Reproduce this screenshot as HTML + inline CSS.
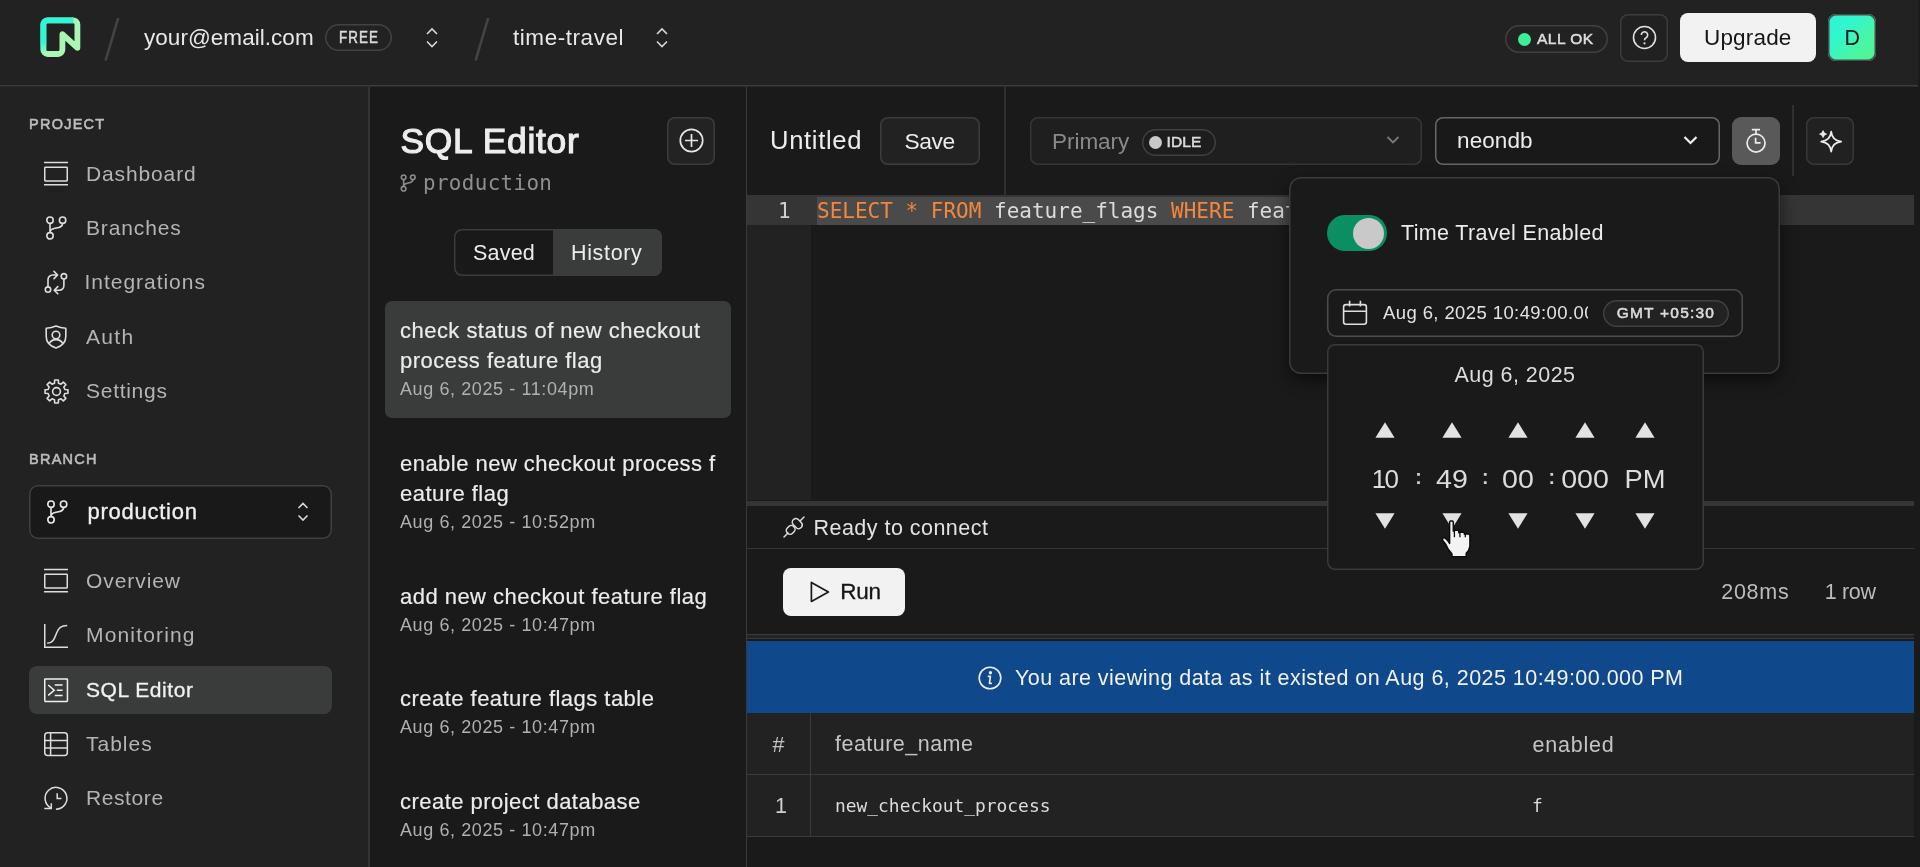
<!DOCTYPE html>
<html lang="en">
<head>
<meta charset="utf-8">
<title>Neon Console - SQL Editor</title>
<style>
*{box-sizing:border-box;margin:0;padding:0}
html,body{width:1920px;height:867px;overflow:hidden;background:#1a1a1a;color:#e6e6e6;font-family:"Liberation Sans",sans-serif;}
.abs{position:absolute}
.t{position:absolute;white-space:nowrap;line-height:1}
.mono{font-family:"DejaVu Sans Mono","Liberation Mono",monospace}
svg{position:absolute;overflow:visible}

/* header */
#header{position:absolute;left:0;top:0;width:1918px;height:85px;background:#222222}
#hline{position:absolute;left:0;top:85px;width:1918px;height:2px;background:linear-gradient(#3a3c3b 0,#3a3c3b 50%,#2a2b2a 50%,#2a2b2a 100%);z-index:3}
/* sidebar */
#sidebar{position:absolute;left:0;top:86px;width:370px;height:781px;background:#222222;border-right:2px solid #333}
#list{position:absolute;left:370px;top:86px;width:377px;height:781px;background:#1a1a1a;border-right:1px solid #3a3a3a}
#main{position:absolute;left:747px;top:86px;width:1173px;height:781px;background:#1a1a1a}

.nav{position:absolute;left:86px;font-size:21px;color:#b4b4b4;white-space:nowrap;line-height:1;letter-spacing:0.45px;margin-top:0px}
.lbl{position:absolute;left:29px;font-size:14.5px;color:#bdbdbd;letter-spacing:1.25px;line-height:1;-webkit-text-stroke:0.55px #bdbdbd}
.btn{position:absolute;border-radius:8px;background:#222}
.q{position:absolute;left:400px;font-size:22px;color:#ececec;white-space:nowrap;line-height:30px;letter-spacing:0.47px;-webkit-text-stroke:0.2px #e8e8e8}
.d{position:absolute;left:400px;font-size:18px;color:#b0b0b0;white-space:nowrap;line-height:1;letter-spacing:0.6px}
.num{font-size:26px;color:#dcdcdc;letter-spacing:0.3px}
#wrap{position:absolute;left:0;top:0;width:1920px;height:867px;will-change:transform}
</style>
</head>
<body>
<div id="wrap">
<div id="header">
<svg style="left:40px;top:16px" width="42" height="42" viewBox="0 0 42 42"><defs><linearGradient id="lg" gradientUnits="userSpaceOnUse" x1="0" y1="0" x2="0" y2="42"><stop offset="0" stop-color="#2ef7d9"/><stop offset="0.62" stop-color="#2ef7d9"/><stop offset="0.9" stop-color="#2ef7d9" stop-opacity="0"/><stop offset="1" stop-color="#2ef7d9" stop-opacity="0"/></linearGradient></defs>
<path d="M3.4 33.8 V8.5 a4.2 4.2 0 0 1 4.2 -4.2 H33.2 a4.2 4.2 0 0 1 4.2 4.2 V31.8 L22.4 18.2 V33.8 a4.2 4.2 0 0 1 -4.2 4.2 H7.6 a4.2 4.2 0 0 1 -4.2 -4.2 Z" fill="none" stroke="#a9f7b4" stroke-width="5.8" stroke-linejoin="round" stroke-linecap="round"/>
<path d="M3.4 38 V8.5 a4.2 4.2 0 0 1 4.2 -4.2 H33.4" fill="none" stroke="url(#lg)" stroke-width="5.8" stroke-linejoin="round"/></svg>
<svg style="left:100px;top:14px" width="24" height="50"><line x1="18.2" y1="4" x2="5.6" y2="46.5" stroke="#444" stroke-width="2.6"/></svg>
<div class="t" id="email" style="left:144.0px;top:27px;font-size:22.5px;color:#e8e8e8;letter-spacing:0.04px">your@email.com</div>
<div class="abs" style="left:325px;top:24px;width:67px;height:27px;box-shadow:inset 0 0 0 1.5px #424242;border-radius:14px"></div>
<div class="t" id="free" style="left:338.8px;top:30px;font-size:16px;color:#dcdcdc;letter-spacing:1.2px;-webkit-text-stroke:0.5px #dcdcdc;transform:scaleX(0.84);transform-origin:0 0">FREE</div>
<svg style="left:424px;top:26px" width="16" height="24"><path d="M3 8 L8 3 L13 8 M3 15.5 L8 20.5 L13 15.5" fill="none" stroke="#d8d8d8" stroke-width="1.6"/></svg>
<svg style="left:470px;top:14px" width="24" height="50"><line x1="18.2" y1="4" x2="5.6" y2="46.5" stroke="#444" stroke-width="2.6"/></svg>
<div class="t" id="proj" style="left:513.0px;top:27px;font-size:22.5px;color:#e8e8e8;letter-spacing:0.55px">time-travel</div>
<svg style="left:654px;top:26px" width="16" height="24"><path d="M3 8 L8 3 L13 8 M3 15.5 L8 20.5 L13 15.5" fill="none" stroke="#d8d8d8" stroke-width="1.6"/></svg>

<div class="abs" style="left:1505px;top:25px;width:103px;height:28px;box-shadow:inset 0 0 0 1.5px #404040;border-radius:14px"></div>
<div class="abs" style="left:1518px;top:33px;width:13px;height:13px;border-radius:50%;background:#3fee98"></div>
<div class="t" id="allok" style="left:1537.0px;top:31px;font-size:15.5px;-webkit-text-stroke:0.55px #dcdcdc;color:#dcdcdc;letter-spacing:0.50px">ALL OK</div>
<div class="abs" style="left:1620px;top:14px;width:48px;height:48px;box-shadow:inset 0 0 0 1.5px #3c3c3c;border-radius:8px;background:#212121"></div>
<svg style="left:1632px;top:25px" width="25" height="25" viewBox="0 0 25 25"><circle cx="12.5" cy="12.5" r="11" fill="none" stroke="#e0e0e0" stroke-width="1.6"/><path d="M9.3 10 a3.2 3.2 0 1 1 4.8 2.8 c-1.1 .6 -1.6 1.2 -1.6 2.4" fill="none" stroke="#e0e0e0" stroke-width="1.6"/><circle cx="12.5" cy="18.3" r="1.1" fill="#e0e0e0"/></svg>
<div class="abs" style="left:1680px;top:13px;width:136px;height:49px;border-radius:8px;background:#f2f2f2"></div>
<div class="t" id="upg" style="left:1704.0px;top:27px;font-size:22.5px;color:#161616;letter-spacing:0.17px">Upgrade</div>
<div class="abs" style="left:1828px;top:14px;width:48px;height:47px;box-shadow:inset 0 0 0 1.5px #4a4a4a;border-radius:8px;background:linear-gradient(135deg,#2bf6d8 0%,#32f6cc 35%,#4af6a0 70%,#50f694 100%)"></div>
<div class="t" id="avd" style="left:1844.5px;top:28px;font-size:21.5px;color:#161616">D</div>
</div>
<div id="sidebar"></div><div id="hline"></div>
<div class="lbl" id="l1" style="top:117px">PROJECT</div>
<svg style="left:44px;top:161px" width="24" height="25" viewBox="0 0 24 25" fill="none" stroke="#dedede" stroke-width="1.5"><path d="M0 1.4 H24 M0 23.7 H24"/><rect x="0.75" y="6.3" width="22.5" height="13.6" rx="0.6"/></svg><div class="nav" id="n1" style="top:163px;letter-spacing:0.87px">Dashboard</div>
<svg style="left:45px;top:216px" width="22.0" height="24.0" viewBox="0 0 22 24" fill="none" stroke="#dedede" stroke-width="1.6"><circle cx="5" cy="4.2" r="3.2"/><circle cx="17.6" cy="4.2" r="3.2"/><circle cx="5" cy="19.8" r="3.2"/><path d="M5 7.4 V16.6 M17.6 7.4 C17.6 11.5 13 11.5 9 12.6 C6.4 13.3 5 14.2 5 16.6"/></svg><div class="nav" id="n2" style="top:217px;letter-spacing:0.86px">Branches</div>
<svg style="left:44px;top:270px" width="24" height="25" viewBox="0 0 24 25" fill="none" stroke="#dedede" stroke-width="1.6" stroke-linejoin="round" stroke-linecap="round"><circle cx="4" cy="19.6" r="2.7"/><circle cx="19.9" cy="6.3" r="2.7"/><path d="M4 16.9 V9.6 a4.6 4.6 0 0 1 4.6 -4.6 H13.2 M10 1.4 L13.6 5 L10 8.6"/><path d="M19.9 9 V15.6 a4.6 4.6 0 0 1 -4.6 4.6 H10.4 M13.8 16.6 L10.2 20.2 L13.8 23.8"/></svg><div class="nav" id="n3" style="top:271px;margin-left:-1.5px;letter-spacing:0.97px">Integrations</div>
<svg style="left:45px;top:325px" width="22" height="24" viewBox="0 0 22 24" fill="none" stroke="#dedede" stroke-width="1.6" stroke-linejoin="round"><path d="M11 1 C8 2.4 4.6 3.1 1.2 3.2 V11.5 C1.2 17 5 21 11 23 C17 21 20.8 17 20.8 11.5 V3.2 C17.4 3.1 14 2.4 11 1 Z"/><circle cx="11" cy="10" r="3.8"/><path d="M4.2 18.6 C5.6 15.8 8 14.6 11 14.6 C14 14.6 16.4 15.8 17.8 18.6"/></svg><div class="nav" id="n4" style="top:326px;letter-spacing:1.33px">Auth</div>
<svg style="left:43.5px;top:378.5px" width="25" height="25" viewBox="0 0 25 25" fill="none" stroke="#dedede" stroke-width="1.6" stroke-linejoin="round"><path d="M10.49 4.14 L10.69 1.04 L14.31 1.04 L14.51 4.14 L16.99 5.17 L19.32 3.12 L21.88 5.68 L19.83 8.01 L20.86 10.49 L23.96 10.69 L23.96 14.31 L20.86 14.51 L19.83 16.99 L21.88 19.32 L19.32 21.88 L16.99 19.83 L14.51 20.86 L14.31 23.96 L10.69 23.96 L10.49 20.86 L8.01 19.83 L5.68 21.88 L3.12 19.32 L5.17 16.99 L4.14 14.51 L1.04 14.31 L1.04 10.69 L4.14 10.49 L5.17 8.01 L3.12 5.68 L5.68 3.12 L8.01 5.17 Z"/><circle cx="12.5" cy="12.5" r="3.9"/></svg><div class="nav" id="n5" style="top:380px;letter-spacing:0.72px">Settings</div>
<div class="lbl" id="l2" style="top:452px">BRANCH</div>
<div class="abs" style="left:29px;top:485px;width:303px;height:54px;box-shadow:inset 0 0 0 1.5px #404040;border-radius:9px;background:#191919"></div>
<svg style="left:46px;top:499.5px" width="22.0" height="24.0" viewBox="0 0 22 24" fill="none" stroke="#e8e8e8" stroke-width="1.6"><circle cx="5" cy="4.2" r="3.2"/><circle cx="17.6" cy="4.2" r="3.2"/><circle cx="5" cy="19.8" r="3.2"/><path d="M5 7.4 V16.6 M17.6 7.4 C17.6 11.5 13 11.5 9 12.6 C6.4 13.3 5 14.2 5 16.6"/></svg><div class="t" id="prodsel" style="left:87.5px;top:501px;font-size:22px;color:#f0f0f0;letter-spacing:0.74px;-webkit-text-stroke:0.35px #f0f0f0">production</div>
<svg style="left:295px;top:500px" width="16" height="24"><path d="M3.5 8 L8 3.5 L12.5 8 M3.5 15.5 L8 20 L12.5 15.5" fill="none" stroke="#d8d8d8" stroke-width="1.6"/></svg>
<svg style="left:44px;top:568px" width="24" height="25" viewBox="0 0 24 25" fill="none" stroke="#dedede" stroke-width="1.5"><path d="M0 1.4 H24 M0 23.7 H24"/><rect x="0.75" y="6.3" width="22.5" height="13.6" rx="0.6"/></svg><div class="nav" id="n6" style="top:570px;letter-spacing:0.93px">Overview</div>
<svg style="left:44px;top:624px" width="24" height="24" viewBox="0 0 24 24" fill="none" stroke="#dedede" stroke-width="1.5"><path d="M0.75 0 V23.2 H24"/><path d="M3.2 19.3 C9.5 19.3 10.5 14 12.6 9 C14.6 4 17 1.6 23.2 1.6"/></svg><div class="nav" id="n7" style="top:624px;letter-spacing:1.16px">Monitoring</div>
<div class="abs" style="left:29px;top:666px;width:303px;height:48px;border-radius:8px;background:#3a3c3b"></div>
<svg style="left:44px;top:678px" width="24" height="24" viewBox="0 0 24 24" fill="none" stroke="#f0f0f0" stroke-width="1.5"><rect x="0.75" y="0.95" width="22.7" height="22.5" rx="0.6"/><path d="M4.2 7 L10.2 12.2 L4.2 17.4 M10.8 7 H18.6 M12.8 12.2 H18.6 M10.8 17.4 H18.6" /></svg><div class="nav" id="n8" style="top:679px;color:#f2f2f2;-webkit-text-stroke:0.3px #f2f2f2;letter-spacing:0.55px">SQL Editor</div>
<svg style="left:44px;top:732px" width="24" height="24" viewBox="0 0 24 24" fill="none" stroke="#dedede" stroke-width="1.5"><rect x="0.75" y="0.85" width="22.6" height="22.6" rx="3"/><path d="M0.75 8.4 H23.3 M0.75 15.9 H23.3 M6.6 0.85 V23.4"/></svg><div class="nav" id="n9" style="top:733px;letter-spacing:1.00px">Tables</div>
<svg style="left:43px;top:786px" width="26" height="26" viewBox="0 0 26 26" fill="none" stroke="#dedede" stroke-width="1.5"><path d="M12.9 23.2 A10.9 10.9 0 1 0 8.2 22.1"/><path d="M1.3 22.4 H8.3 V17.2" /><path d="M14.2 7.2 V12.4 H18.4"/></svg><div class="nav" id="n10" style="top:787px;letter-spacing:0.59px">Restore</div>

<div id="list"></div>
<div class="t" id="title" style="left:400.4px;top:124px;font-size:35.4px;color:#ededed;letter-spacing:0.73px;-webkit-text-stroke:1.15px #ededed">SQL Editor</div>
<div class="btn" style="left:667px;top:117px;width:48px;height:48px;background:#232323;box-shadow:inset 0 0 0 1.5px #3c3c3c"></div>
<svg style="left:679px;top:128px" width="25" height="25" viewBox="0 0 25 25" fill="none" stroke="#e6e6e6" stroke-width="1.7"><circle cx="12.5" cy="12.5" r="11.2"/><path d="M12.5 6 V19 M6 12.5 H19"/></svg>
<svg style="left:400px;top:174px" width="16" height="18" viewBox="0 0 22 24" fill="none" stroke="#8c8c8c" stroke-width="2.2"><circle cx="5" cy="4.2" r="3.2"/><circle cx="17.6" cy="4.2" r="3.2"/><circle cx="5" cy="19.8" r="3.2"/><path d="M5 7.4 V16.6 M17.6 7.4 C17.6 11.5 13 11.5 9 12.6 C6.4 13.3 5 14.2 5 16.6"/></svg>
<div class="t mono" id="prodm" style="left:423px;top:173px;letter-spacing:0.35px;font-size:20.9px;color:#8f8f8f">production</div>
<div class="abs" style="left:454px;top:229px;width:208px;height:47px;border-radius:8px;background:#191919"></div>
<div class="abs" style="left:553px;top:229px;width:109px;height:47px;border-radius:0 8px 8px 0;background:#3a3c3b"></div><div class="abs" style="left:454px;top:229px;width:208px;height:47px;border-radius:8px;box-shadow:inset 0 0 0 1.5px #3c3c3c"></div>
<div class="t" id="saved" style="left:473px;top:243px;font-size:21.5px;color:#ececec;letter-spacing:0.2px">Saved</div>
<div class="t" id="hist" style="left:571px;top:243px;font-size:21.5px;color:#ececec;letter-spacing:0.65px">History</div>
<div class="abs" style="left:385px;top:301px;width:346px;height:117px;border-radius:7px;background:#3a3c3b"></div>
<div class="q" id="q1" style="top:316px">check status of new checkout<br>process feature flag</div>
<div class="d" id="d1" style="top:380px">Aug 6, 2025 - 11:04pm</div>
<div class="q" id="q2" style="top:449px">enable new checkout process f<br>eature flag</div>
<div class="d" id="d2" style="top:513px">Aug 6, 2025 - 10:52pm</div>
<div class="q" id="q3" style="top:582px">add new checkout feature flag</div>
<div class="d" id="d3" style="top:616px">Aug 6, 2025 - 10:47pm</div>
<div class="q" id="q4" style="top:684px">create feature flags table</div>
<div class="d" id="d4" style="top:718px">Aug 6, 2025 - 10:47pm</div>
<div class="q" id="q5" style="top:787px">create project database</div>
<div class="d" id="d5" style="top:821px">Aug 6, 2025 - 10:47pm</div>

<div id="main"></div>
<div class="t" id="untitled" style="left:770.0px;top:128px;font-size:25.6px;color:#ececec;letter-spacing:0.67px">Untitled</div>
<div class="btn" style="left:880px;top:117px;width:100px;height:48px;background:#222;box-shadow:inset 0 0 0 1.5px #3c3c3c"></div>
<div class="t" id="save" style="left:904.4px;top:130px;font-size:22.8px;color:#ececec;letter-spacing:-0.37px">Save</div>
<div class="abs" style="left:1004px;top:87px;width:2px;height:108px;background:#303030"></div>
<div class="btn" style="left:1030px;top:117px;width:392px;height:48px;background:#1f1f1f;box-shadow:inset 0 0 0 1.5px #363636"></div>
<div class="t" id="primary" style="left:1052.0px;top:131px;font-size:22.5px;color:#8a8a8a;letter-spacing:-0.03px">Primary</div>
<div class="abs" style="left:1142px;top:129px;width:74px;height:27px;box-shadow:inset 0 0 0 1.5px #404040;border-radius:14px;background:#1d1d1d"></div>
<div class="abs" style="left:1149px;top:136px;width:13px;height:13px;border-radius:50%;background:#c8c8c8"></div>
<div class="t" id="idle" style="left:1166.5px;top:134px;font-size:15.5px;-webkit-text-stroke:0.55px #dcdcdc;color:#dadada;letter-spacing:0.12px">IDLE</div>
<svg style="left:1385px;top:134px" width="16" height="12"><path d="M2.5 3 L8 8.5 L13.5 3" fill="none" stroke="#7a7a7a" stroke-width="1.8"/></svg>
<div class="btn" style="left:1435px;top:117px;width:285px;height:48px;background:#191919;box-shadow:inset 0 0 0 1.5px #666"></div>
<div class="t" id="neondb" style="left:1457.1px;top:130px;font-size:22.5px;color:#ececec;letter-spacing:0.06px">neondb</div>
<svg style="left:1682px;top:134px" width="17" height="12"><path d="M2.5 3 L8.5 9 L14.5 3" fill="none" stroke="#f0f0f0" stroke-width="2.2"/></svg>
<div class="abs" style="left:1732px;top:117px;width:48px;height:48px;border-radius:9px;background:#595959"></div>
<svg style="left:1743px;top:126px" width="26" height="30" viewBox="0 0 26 30" fill="none" stroke="#ececec" stroke-width="1.7"><circle cx="13.05" cy="17.1" r="9"/><path d="M8.8 3.7 H17 M13 3.7 V8.1 M12.6 11.8 V16.9 H17.6"/></svg>
<div class="abs" style="left:1792px;top:105px;width:2px;height:71px;background:#303030"></div>
<div class="btn" style="left:1806px;top:117px;width:48px;height:48px;background:#212121;box-shadow:inset 0 0 0 1.5px #383838"></div>
<svg style="left:1818px;top:128px" width="26" height="26" viewBox="0 0 26 26" fill="none" stroke="#ececec" stroke-width="1.5" stroke-linejoin="round"><path d="M13.2 3.7 C13.8 9.6 17.3 13.1 23.2 13.7 C17.3 14.3 13.8 17.8 13.2 23.7 C12.6 17.8 9.1 14.3 3.2 13.7 C9.1 13.1 12.6 9.6 13.2 3.7 Z" stroke-width="1.7"/><path d="M5.1 2.6 Q5.7 5.5 8.6 6.1 Q5.7 6.7 5.1 9.6 Q4.5 6.7 1.6 6.1 Q4.5 5.5 5.1 2.6 Z" fill="#ececec" stroke-width="0.8"/></svg>

<!-- editor -->
<div class="abs" style="left:747px;top:195px;width:64px;height:305px;background:#222"></div>
<div class="abs" style="left:747px;top:195px;width:1167px;height:30px;background:#353535"></div>

<div class="abs" style="left:816.5px;top:197px;width:474px;height:28px;background:#4a4a4a"></div>
<div class="t mono" id="ln" style="left:778px;top:201px;font-size:20.9px;color:#d0d0d0">1</div>
<div class="t mono" id="code" style="left:817px;top:201px;font-size:21px;color:#dcdcdc"><span style="color:#f4873c">SELECT</span> <span style="color:#f4873c">*</span> <span style="color:#f4873c">FROM</span> feature_flags <span style="color:#f4873c">WHERE</span> feature_name</div>
<div class="abs" style="left:747px;top:501px;width:1167px;height:5px;background:#353535"></div>
<svg style="left:783px;top:516px" width="22" height="22" viewBox="0 0 22 22" fill="none" stroke="#dcdcdc" stroke-width="1.5" stroke-linecap="round"><path d="M1 21 L5 17 M17.5 4.5 L21 1"/><rect x="3.2" y="10.2" width="9" height="7.4" rx="3.4" transform="rotate(-45 7.7 13.9)"/><path d="M10.2 8.6 L13.6 12 A3.6 3.6 0 0 0 18.6 7 L15.6 3.8 A3.6 3.6 0 0 0 10.2 8.6 Z" /></svg>
<div class="t" id="ready" style="left:813.5px;top:518px;font-size:21.5px;color:#e2e2e2;letter-spacing:0.47px">Ready to connect</div>
<div class="abs" style="left:747px;top:548px;width:1167px;height:1px;background:#363636"></div>
<div class="abs" style="left:783px;top:568px;width:122px;height:48px;border-radius:8px;background:#f2f2f2"></div>
<svg style="left:809px;top:580px" width="22" height="24" viewBox="0 0 22 24" fill="none" stroke="#1a1a1a" stroke-width="1.7" stroke-linejoin="round"><path d="M2.4 2.4 L19.4 12 L2.4 21.4 Z"/></svg>
<div class="t" id="run" style="-webkit-text-stroke:0.3px #151515;left:840.2px;top:581px;font-size:22.5px;color:#151515;letter-spacing:-0.20px">Run</div>
<div class="t" id="ms" style="left:1721.2px;top:582px;font-size:21.5px;color:#bcbcbc;letter-spacing:0.75px">208ms</div>
<div class="t" id="row" style="left:1824.7px;top:582px;font-size:21.5px;color:#bcbcbc;letter-spacing:-0.34px">1 row</div>
<div class="abs" style="left:747px;top:634px;width:1167px;height:1px;background:#3a3a3a"></div>
<div class="abs" style="left:747px;top:635px;width:1167px;height:3px;background:#242424"></div>
<div class="abs" style="left:747px;top:638px;width:1167px;height:1px;background:#3a3a3a"></div>
<div class="abs" style="left:747px;top:641px;width:1167px;height:72px;background:#0f498b"></div>
<svg style="left:978px;top:666px" width="24" height="24" viewBox="0 0 24 24" fill="none" stroke="#f0f0f0" stroke-width="1.6"><circle cx="12" cy="12" r="10.8"/><path d="M10.4 10.4 H12.4 L11.4 17.4 H13.2" stroke-linecap="round" stroke-linejoin="round"/><circle cx="12.4" cy="6.8" r="0.9" fill="#f0f0f0"/></svg>
<div class="t" id="banner" style="left:1014.9px;top:668px;font-size:21.5px;color:#f2f2f2;letter-spacing:0.46px">You are viewing data as it existed on Aug 6, 2025 10:49:00.000 PM</div>
<div class="abs" style="left:747px;top:713px;width:1167px;height:124px;background:#222"></div>
<div class="abs" style="left:747px;top:774px;width:1167px;height:1px;background:#3a3a3a"></div>
<div class="abs" style="left:747px;top:836px;width:1167px;height:1px;background:#3a3a3a"></div>
<div class="abs" style="left:810px;top:713px;width:1px;height:123px;background:#3a3a3a"></div>
<div class="t" id="hash" style="left:772.5px;top:734.5px;font-size:21.5px;color:#c4c4c4">#</div>
<div class="t" id="fname" style="left:835.0px;top:734px;font-size:21.5px;color:#c4c4c4;letter-spacing:0.48px">feature_name</div>
<div class="t" id="enabled" style="left:1532.5px;top:735px;font-size:21.5px;color:#c4c4c4;letter-spacing:0.80px">enabled</div>
<div class="t" id="r1" style="left:775px;top:795.5px;font-size:21.5px;color:#d0d0d0">1</div>
<div class="t mono" id="r1a" style="left:835px;top:797px;font-size:17.9px;color:#dcdcdc">new_checkout_process</div>
<div class="t mono" id="r1b" style="left:1532px;top:797px;font-size:17.9px;color:#dcdcdc">f</div>


<!-- popover -->
<div class="abs" style="left:1289px;top:177px;width:491px;height:197px;border-radius:12px;background:#1a1a1a;box-shadow:inset 0 0 0 1.5px #3a3a3a,0 6px 16px rgba(0,0,0,0.55)"></div>
<div class="abs" style="left:1327px;top:215px;width:60px;height:36px;border-radius:18px;background:#0b8e62"></div>
<div class="abs" style="left:1353px;top:217.5px;width:31px;height:31px;border-radius:50%;background:#c9c9c9"></div>
<div class="t" id="tte" style="left:1401.1px;top:223px;font-size:21.5px;color:#ececec;letter-spacing:0.33px">Time Travel Enabled</div>
<div class="abs" style="left:1327px;top:289px;width:416px;height:48px;box-shadow:inset 0 0 0 1.5px #4c4c4c;border-radius:9px;background:#1a1a1a"></div>
<svg style="left:1342px;top:300px" width="26" height="26" viewBox="0 0 26 26" fill="none" stroke="#e0e0e0" stroke-width="1.6"><rect x="1.6" y="4.6" width="22.8" height="19.6" rx="2.4"/><path d="M1.6 11.2 H24.4 M7.6 0.8 V6.6 M18.4 0.8 V6.6"/></svg>
<div class="t" id="inp" style="left:1383px;top:304px;font-size:18.5px;color:#e4e4e4;letter-spacing:0.4px;width:204.6px;overflow:hidden">Aug 6, 2025 10:49:00.000 PM</div>
<div class="abs" style="left:1603px;top:300px;width:126px;height:27px;box-shadow:inset 0 0 0 1.5px #404040;border-radius:14px;background:#222"></div>
<div class="t" id="gmt" style="left:1616.7px;top:305px;font-size:15.5px;-webkit-text-stroke:0.55px #dcdcdc;color:#dcdcdc;letter-spacing:1.22px">GMT +05:30</div>
<div class="abs" style="left:1327px;top:344px;width:377px;height:226px;box-shadow:inset 0 0 0 1.5px #3a3a3a;border-radius:8px;background:#1a1a1a"></div>
<div class="t" id="dpdate" style="left:1415px;width:200px;text-align:center;top:365px;font-size:21.5px;color:#dcdcdc;letter-spacing:0.46px">Aug 6, 2025</div>
<svg style="left:1375.2px;top:422px" width="20" height="16"><path d="M10 0.3 L19.6 15.8 H0.4 Z" fill="#e2e2e2"/></svg><svg style="left:1375.2px;top:513px" width="20" height="16"><path d="M10 15.7 L19.6 0.2 H0.4 Z" fill="#e2e2e2"/></svg><svg style="left:1441.7px;top:422px" width="20" height="16"><path d="M10 0.3 L19.6 15.8 H0.4 Z" fill="#e2e2e2"/></svg><svg style="left:1441.7px;top:513px" width="20" height="16"><path d="M10 15.7 L19.6 0.2 H0.4 Z" fill="#e2e2e2"/></svg><svg style="left:1508.1px;top:422px" width="20" height="16"><path d="M10 0.3 L19.6 15.8 H0.4 Z" fill="#e2e2e2"/></svg><svg style="left:1508.1px;top:513px" width="20" height="16"><path d="M10 15.7 L19.6 0.2 H0.4 Z" fill="#e2e2e2"/></svg><svg style="left:1574.5px;top:422px" width="20" height="16"><path d="M10 0.3 L19.6 15.8 H0.4 Z" fill="#e2e2e2"/></svg><svg style="left:1574.5px;top:513px" width="20" height="16"><path d="M10 15.7 L19.6 0.2 H0.4 Z" fill="#e2e2e2"/></svg><svg style="left:1635px;top:422px" width="20" height="16"><path d="M10 0.3 L19.6 15.8 H0.4 Z" fill="#e2e2e2"/></svg><svg style="left:1635px;top:513px" width="20" height="16"><path d="M10 15.7 L19.6 0.2 H0.4 Z" fill="#e2e2e2"/></svg>
<div class="t num" id="num0" style="left:1356.4px;width:56px;text-align:center;top:466px;letter-spacing:-1.70px">10</div><div class="t num" id="num1" style="left:1423.7px;width:56px;text-align:center;top:466px;letter-spacing:0px;transform:scaleX(1.1)">49</div><div class="t num" id="num2" style="left:1490.1px;width:56px;text-align:center;top:466px;letter-spacing:0px;transform:scaleX(1.1)">00</div><div class="t num" id="num3" style="left:1556.5px;width:56px;text-align:center;top:466px;letter-spacing:0px;transform:scaleX(1.1)">000</div><div class="t num" id="num4" style="left:1617.0px;width:56px;text-align:center;top:466px;letter-spacing:0px;transform:scaleX(1.05)">PM</div><div class="t" id="col0" style="margin-top:2px;color:#c4c4c4;left:1408.5px;width:20px;text-align:center;top:466px;font-size:19.5px;font-weight:bold;color:#cfcfcf">:</div><div class="t" id="col1" style="margin-top:2px;color:#c4c4c4;left:1475.3px;width:20px;text-align:center;top:466px;font-size:19.5px;font-weight:bold;color:#cfcfcf">:</div><div class="t" id="col2" style="margin-top:2px;color:#c4c4c4;left:1541.7px;width:20px;text-align:center;top:466px;font-size:19.5px;font-weight:bold;color:#cfcfcf">:</div><svg style="left:1440px;top:517px" width="32" height="42" viewBox="0 0 32 42"><path d="M9.6 5.0 L10.4 3.9 L12.5 3.9 L13.3 5.0 L13.3 14.0 L15.2 13.2 L18.0 13.2 L18.8 14.2 L18.8 15.8 L21.0 15.2 L23.6 15.2 L24.4 16.2 L24.4 17.3 L26.0 16.7 L28.8 16.9 L29.9 18.2 L29.9 29.5 L28.4 33.8 L26.2 36.2 L26.2 39.7 L12.0 39.7 L12.0 37.0 L8.2 32.2 L5.6 27.2 L2.6 23.2 L2.6 21.4 L4.6 20.6 L7.4 23.2 L9.6 26.4 Z" fill="#f3f3f3" stroke="#0c0c0c" stroke-width="1.5" stroke-linejoin="round"/><path d="M14.4 14.0 V20.2 M19.9 15.8 V20.2 M25.3 17.3 V20.2" stroke="#0c0c0c" stroke-width="1.3" fill="none"/></svg>
</div>
</body>
</html>
